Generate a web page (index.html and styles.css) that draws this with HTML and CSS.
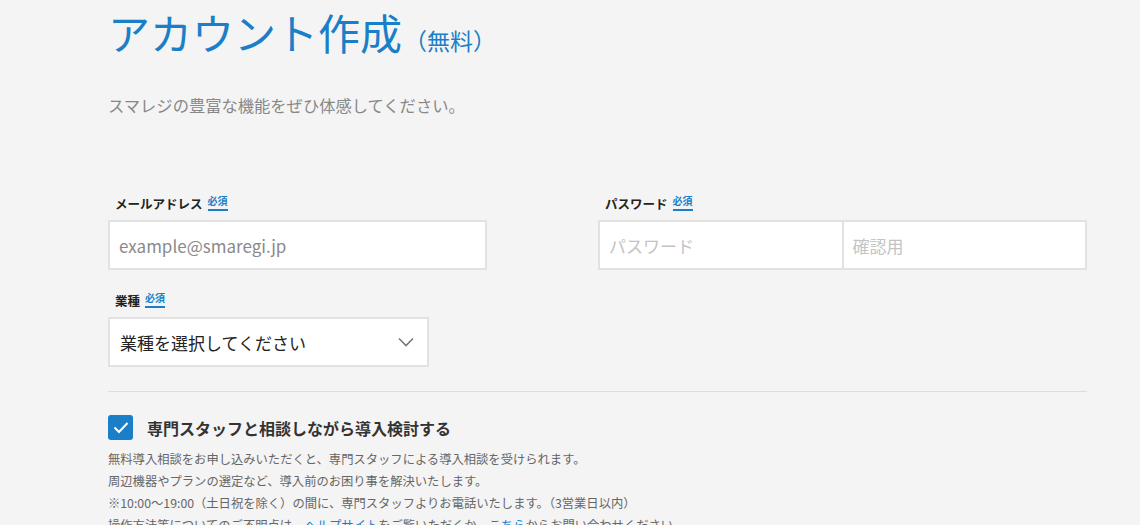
FILE: index.html
```html
<!DOCTYPE html>
<html lang="ja">
<head>
  <meta charset="UTF-8">
  <title>アカウント作成</title>
  <link rel="stylesheet" href="styles.css">
</head>
<body>
  <main class="signup">
    <h1 class="title">アカウント作成<small>（無料）</small></h1>
    <p class="lead">スマレジの豊富な機能をぜひ体感してください。</p>

    <div class="fields">
      <div class="field">
        <label class="label">メールアドレス<span class="req">必須</span></label>
        <input class="input" type="text" placeholder="example@smaregi.jp">
      </div>
      <div class="field">
        <label class="label">パスワード<span class="req">必須</span></label>
        <div class="pair">
          <input class="input" type="password" placeholder="パスワード">
          <input class="input" type="password" placeholder="確認用">
        </div>
      </div>
      <div class="field">
        <label class="label">業種<span class="req">必須</span></label>
        <div class="select">
          <span>業種を選択してください</span>
          <svg width="16" height="10" viewBox="0 0 16 10"><path d="M1 1.5l7 7 7-7" fill="none" stroke="#777" stroke-width="1.6"/></svg>
        </div>
      </div>
    </div>

    <hr class="divider">

    <label class="check">
      <span class="box"><svg width="16" height="13" viewBox="0 0 16 13"><path d="M1.5 6.5l4.5 4.5 8.5-9" fill="none" stroke="#fff" stroke-width="2"/></svg></span>
      専門スタッフと相談しながら導入検討する
    </label>
    <div class="notes">
      <p>無料導入相談をお申し込みいただくと、専門スタッフによる導入相談を受けられます。</p>
      <p>周辺機器やプランの選定など、導入前のお困り事を解決いたします。</p>
      <p>※10:00～19:00（土日祝を除く）の間に、専門スタッフよりお電話いたします。（3営業日以内）</p>
      <p>操作方法等についてのご不明点は、<a href="#">ヘルプサイト</a>をご覧いただくか、<a href="#">こちら</a>からお問い合わせください。</p>
    </div>
  </main>
</body>
</html>
```

FILE: styles.css
```css
body {
  margin: 0;
  background-color: #f4f4f4;
  font-family: 'Noto Sans CJK JP', 'Noto Sans', sans-serif;
  color: #333;
}
.signup {
  width: 979px;
  margin-left: 108px;
}
.title {
  margin: 0;
  font-size: 42px;
  font-weight: 400;
  line-height: 64px;
  color: #1a7fc8;
}
.title small {
  font-size: 23px;
  margin-left: 2px;
}
.lead {
  margin: 20px 0 0;
  font-size: 16.3px;
  line-height: 26px;
  color: #888;
}
.fields {
  display: grid;
  grid-template-columns: 379px 489px;
  column-gap: 111px;
  row-gap: 17px;
  margin-top: 72px;
}
.label {
  display: flex;
  align-items: center;
  padding-left: 7px;
  height: 26px;
  font-size: 12.5px;
  font-weight: 700;
  color: #222;
}
.req {
  margin-left: 5px;
  padding-bottom: 2px;
  border-bottom: 2px solid #1a7fc8;
  font-size: 10px;
  line-height: 12px;
  color: #1a7fc8;
}
.input {
  box-sizing: border-box;
  width: 100%;
  height: 50px;
  margin-top: 4px;
  padding: 0 9px;
  border: 2px solid #e2e2e2;
  background: #fff;
  font-family: inherit;
  font-size: 17px;
  outline: none;
}
.input::placeholder {
  color: #8a8a8a;
}
.pair {
  display: flex;
}
.pair .input {
  flex: 1;
}
.pair .input + .input {
  border-left: none;
}
.pair .input::placeholder {
  color: #c4c4c4;
}
.select {
  box-sizing: border-box;
  display: flex;
  align-items: center;
  justify-content: space-between;
  width: 321px;
  height: 50px;
  margin-top: 4px;
  padding: 0 13px 0 10px;
  border: 2px solid #e2e2e2;
  background: #fff;
  font-size: 17px;
  color: #222;
}
.divider {
  margin: 24px 0 0;
  border: none;
  border-top: 1px solid #ddd;
}
.check {
  display: flex;
  align-items: center;
  gap: 14px;
  margin-top: 23px;
  font-size: 16px;
  font-weight: 700;
  color: #333;
}
.box {
  display: flex;
  align-items: center;
  justify-content: center;
  width: 25px;
  height: 25px;
  border-radius: 3px;
  background: #1a7fc8;
}
.notes {
  margin-top: 8px;
}
.notes p {
  margin: 0;
  font-size: 12.3px;
  line-height: 22px;
  color: #666;
}
.notes a {
  color: #1a7fc8;
  text-decoration: none;
}
```
